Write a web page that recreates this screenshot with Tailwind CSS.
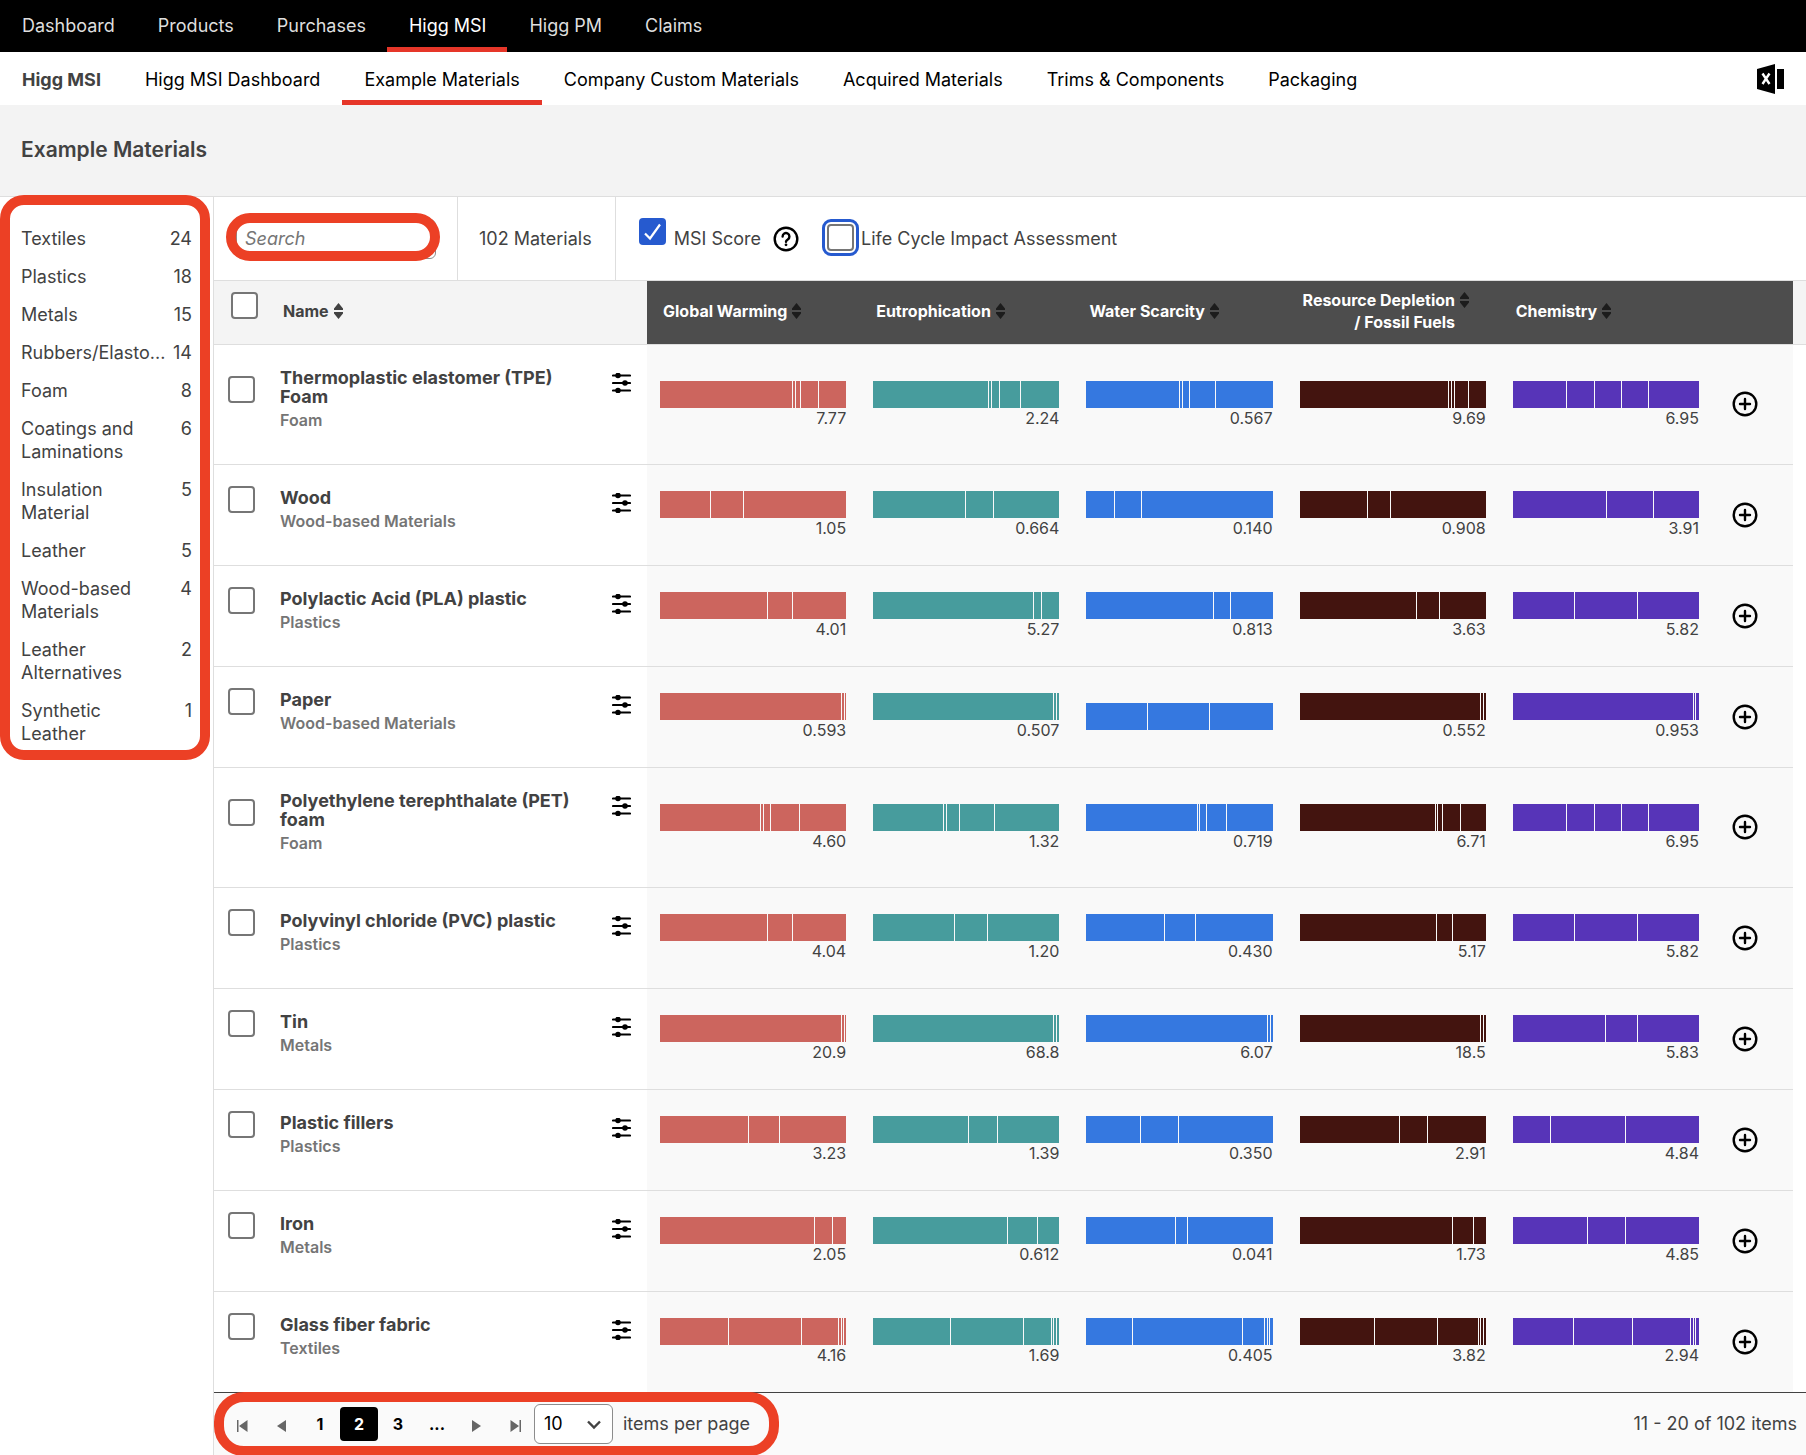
<!DOCTYPE html>
<html lang="en">
<head>
  <meta charset="UTF-8" />
  <meta name="viewport" content="width=device-width, initial-scale=1.0" />
  <title>Example Materials</title>
  <script src="https://cdn.jsdelivr.net/npm/@tailwindcss/browser@4"></script>
</head>
<body class="min-h-screen flex flex-col bg-white text-[#424242] text-lg font-['Inter',sans-serif]">

  <!-- Main navigation -->
  <nav class="flex h-[52px] bg-black text-[#dedede]">
    <a href="#" class="pl-[22px] pr-[21px] pt-3 leading-7">Dashboard</a>
    <a href="#" class="pl-[22px] pr-[21px] pt-3 leading-7">Products</a>
    <a href="#" class="pl-[22px] pr-[21px] pt-3 leading-7">Purchases</a>
    <a href="#" class="pl-[22px] pr-[21px] pt-3 leading-7 text-white border-b-5 border-[#e63629]">Higg MSI</a>
    <a href="#" class="pl-[22px] pr-[21px] pt-3 leading-7">Higg PM</a>
    <a href="#" class="pl-[22px] pr-[21px] pt-3 leading-7">Claims</a>
  </nav>

  <!-- Section navigation -->
  <nav class="flex h-[53px] bg-white text-black">
    <span class="px-[22px] pt-[14px] leading-7 font-bold text-[#424242]">Higg MSI</span>
    <a href="#" class="px-[22px] pt-[14px] leading-7">Higg MSI Dashboard</a>
    <a href="#" class="px-[22px] pt-[14px] leading-7 border-b-5 border-[#e63629]">Example Materials</a>
    <a href="#" class="px-[22px] pt-[14px] leading-7">Company Custom Materials</a>
    <a href="#" class="px-[22px] pt-[14px] leading-7">Acquired Materials</a>
    <a href="#" class="px-[22px] pt-[14px] leading-7">Trims &amp; Components</a>
    <a href="#" class="px-[22px] pt-[14px] leading-7">Packaging</a>
    <button aria-label="Export to Excel" class="ml-auto mr-[22px]">
      <svg width="27" height="30" viewBox="0 0 27 30">
        <path d="M0 5 18 0v30L0 25z" />
        <path d="M20 5h7v20h-7z" />
        <path d="M5.500 9.500 12.500 20M12.500 9.500 5.500 20" stroke="#fff" stroke-width="2.400" />
      </svg>
    </button>
  </nav>

  <header class="flex items-center h-[92px] pl-[21px] bg-[#f3f3f3] border-b border-[#dedede]">
    <h1 class="text-[21px] font-semibold">Example Materials</h1>
  </header>

  <div class="flex flex-1">
    <!-- Categories -->
    <aside class="relative w-[214px] shrink-0 border-r border-[#dedede]">
      <ul id="categories" class="flex flex-col gap-[15px] pl-[21px] pr-[21px] pt-[30px] leading-[23px]"></ul>
      <div class="absolute left-0 -top-[2px] w-[210px] h-[565px] border-10 border-[#ec4025] rounded-3xl pointer-events-none"></div>
    </aside>

    <main class="flex-1 min-w-0 flex flex-col">
      <!-- Filters -->
      <div class="flex h-[84px] border-b border-[#dedede]">
        <div class="relative flex items-center pl-[22px] pr-[21px] border-r border-[#dedede]">
          <input type="text" placeholder="Search" aria-label="Search" class="w-[200px] h-10 px-2 border border-[#8c8c8c] rounded-md italic placeholder:text-[#757575]" />
          <div class="absolute left-3 top-4 w-[214px] h-12 border-10 border-[#ec4025] rounded-3xl pointer-events-none"></div>
        </div>
        <div class="flex items-center pl-[21px] pr-[23px] border-r border-[#dedede]">102 Materials</div>
        <div class="flex items-center pl-[23px]">
          <span class="relative mb-[14px]">
            <input type="checkbox" id="msiScore" checked class="block appearance-none size-[27px] rounded bg-[#265acf]" />
            <svg class="absolute inset-0 pointer-events-none" width="27" height="27" viewBox="0 0 27 27" fill="none" stroke="#fff" stroke-width="2.200"><path d="M6 15.500 11 20.500 21 6.500" /></svg>
          </span>
          <label for="msiScore" class="ml-2">MSI Score</label>
          <button aria-label="About MSI Score" class="ml-3">
            <svg width="26" height="26" viewBox="0 0 26 26" fill="none" stroke="#000" stroke-width="2.400">
              <circle cx="13" cy="13" r="11.300" />
              <path d="M9.600 10.500a3.400 3.400 0 1 1 5.200 2.900c-1.300.8-1.800 1.300-1.800 2.300" stroke-linecap="round" />
              <circle cx="13" cy="18.800" r="1.400" fill="#000" stroke="none" />
            </svg>
          </button>
          <input type="checkbox" id="lcia" class="ml-7 mb-0.5 appearance-none size-[27px] rounded border-2 border-[#767676] bg-white outline-3 outline-offset-2 outline-[#265acf]" />
          <label for="lcia" class="ml-[7px]">Life Cycle Impact Assessment</label>
        </div>
      </div>

      <!-- Materials -->
      <table class="w-full table-fixed border-collapse">
        <colgroup>
          <col class="w-[66px]" /><col class="w-[314px]" /><col class="w-[53px]" />
          <col /><col /><col /><col /><col />
          <col class="w-[80px]" /><col class="w-[13px]" />
        </colgroup>
        <thead>
          <tr id="head" class="h-[63px] border-b border-[#dedede] text-base font-extrabold leading-[22px]"></tr>
        </thead>
        <tbody id="rows"></tbody>
      </table>

      <!-- Paging -->
      <footer class="relative flex-1 flex items-center min-h-[63px] pl-[9px] pr-[9px] bg-[#fafafa] border-t border-[#424242]">
        <div class="flex items-center gap-px text-base font-bold text-black">
          <button aria-label="First page" class="w-[38px] h-[34px] pt-1 flex items-center justify-center"><svg width="11" height="12" viewBox="0 0 11 12" fill="#666"><path d="M0 0h1.500v12H0zM10.500 0v12L2 6z" /></svg></button>
          <button aria-label="Previous page" class="w-[38px] h-[34px] pt-1 flex items-center justify-center"><svg width="9" height="12" viewBox="0 0 9 12" fill="#666"><path d="M9 0v12L0 6z" /></svg></button>
          <button class="w-[38px] h-[34px]">1</button>
          <button aria-current="page" class="w-[38px] h-[34px] rounded bg-black text-white">2</button>
          <button class="w-[38px] h-[34px]">3</button>
          <button class="w-[38px] h-[34px]">...</button>
          <button aria-label="Next page" class="w-[38px] h-[34px] pt-1 flex items-center justify-center"><svg width="9" height="12" viewBox="0 0 9 12" fill="#666"><path d="M0 0v12l9-6z" /></svg></button>
          <button aria-label="Last page" class="w-[38px] h-[34px] pt-1 flex items-center justify-center"><svg width="11" height="12" viewBox="0 0 11 12" fill="#666"><path d="M9.500 0H11v12H9.500zM.500 0v12L9 6z" /></svg></button>
        </div>
        <div class="relative">
          <select id="pageSize" class="block appearance-none w-[79px] h-10 pl-[9px] border border-[#8c8c8c] rounded-md bg-white text-black">
            <option>10</option>
            <option>20</option>
            <option>50</option>
          </select>
          <svg class="absolute right-3 top-4 pointer-events-none" width="14" height="10" viewBox="0 0 14 10" fill="none" stroke="#424242" stroke-width="2.400"><path d="M1 1.500 7 7.500 13 1.500" /></svg>
        </div>
        <label for="pageSize" class="ml-[10px]">items per page</label>
        <span class="ml-auto">11 - 20 of 102 items</span>
        <div class="absolute left-0 -top-px w-[565px] h-[64px] border-10 border-[#ec4025] rounded-[30px] pointer-events-none"></div>
      </footer>
    </main>
  </div>

  <script>
    const categoryList = [
      ['Textiles', 24], ['Plastics', 18], ['Metals', 15], ['Rubbers/Elasto...', 14], ['Foam', 8],
      ['Coatings and Laminations', 6], ['Insulation Material', 5], ['Leather', 5],
      ['Wood-based Materials', 4], ['Leather Alternatives', 2], ['Synthetic Leather', 1]
    ];

    const metrics = [
      { name: 'Global Warming', color: 'bg-[#cc655e]' },
      { name: 'Eutrophication', color: 'bg-[#479c9d]' },
      { name: 'Water Scarcity', color: 'bg-[#3578e0]' },
      { name: 'Resource Depletion<br>/ Fossil Fuels', color: 'bg-[#43140f]' },
      { name: 'Chemistry', color: 'bg-[#5734b8]' }
    ];

    // scores: one [value, cumulative % where each segment ends] per metric
    const materials = [
      { name: 'Thermoplastic elastomer (TPE) Foam', type: 'Foam', scores: [
        ['7.77', [71.7, 73.3, 75.9, 85.5]], ['2.24', [62.2, 63.6, 67.9, 79.5]], ['0.567', [50.2, 51.7, 55.7, 69.4]], ['9.69', [80.4, 81.8, 83.7, 90.8]], ['6.95', [29.1, 44.1, 58.6, 73]]] },
      { name: 'Wood', type: 'Wood-based Materials', scores: [
        ['1.05', [27.2, 45]], ['0.664', [49.9, 64.9]], ['0.140', [15.3, 30]], ['0.908', [36.5, 49.3]], ['3.91', [50.7, 75.6]]] },
      { name: 'Polylactic Acid (PLA) plastic', type: 'Plastics', scores: [
        ['4.01', [57.9, 71.4]], ['5.27', [86.2, 90.8]], ['0.813', [68.5, 77.6]], ['3.63', [63, 75.2]], ['5.82', [33.6, 67.3]]] },
      { name: 'Paper', type: 'Wood-based Materials', scores: [
        ['0.593', [97.5, 99.1]], ['0.507', [97.3, 98.6]], ['', [33.1, 66.5]], ['0.552', [97.6, 99.1]], ['0.953', [97.4, 98.6]]] },
      { name: 'Polyethylene terephthalate (PET) foam', type: 'Foam', scores: [
        ['4.60', [54.3, 55.7, 59.7, 75.4]], ['1.32', [37.9, 39.5, 46.5, 65.4]], ['0.719', [59.9, 61.3, 64.8, 75.5]], ['6.71', [73.3, 74.6, 77.1, 86.8]], ['6.95', [29.1, 44.1, 58.6, 73]]] },
      { name: 'Polyvinyl chloride (PVC) plastic', type: 'Plastics', scores: [
        ['4.04', [58.1, 71.5]], ['1.20', [44, 61.5]], ['0.430', [42, 58.8]], ['5.17', [73.8, 82.5]], ['5.82', [33.6, 67.3]]] },
      { name: 'Tin', type: 'Metals', scores: [
        ['20.9', [97.5, 99.1]], ['68.8', [97.3, 98.6]], ['6.07', [97.6, 98.9]], ['18.5', [97.6, 99.1]], ['5.83', [50.3, 67.4]]] },
      { name: 'Plastic fillers', type: 'Plastics', scores: [
        ['3.23', [47.9, 64.5]], ['1.39', [51.4, 66.9]], ['0.350', [29.3, 49.8]], ['2.91', [53.8, 68.9]], ['4.84', [20.5, 60.8]]] },
      { name: 'Iron', type: 'Metals', scores: [
        ['2.05', [83.5, 92.9]], ['0.612', [72.3, 88.7]], ['0.041', [48.1, 54.6]], ['1.73', [82.5, 93.8]], ['4.85', [40.6, 60.8]]] },
      { name: 'Glass fiber fabric', type: 'Textiles', scores: [
        ['4.16', [36.8, 76.4, 96.1, 97.5, 99.1]], ['1.69', [41.9, 81, 96, 97.3, 98.6]], ['0.405', [24.8, 84.2, 96, 97.6, 98.9]], ['3.82', [40.3, 74.6, 96.2, 97.6, 99.1]], ['2.94', [32.7, 64.8, 95.9, 97.4, 98.6]]] }
    ];

    const sortIcon = `<svg class="shrink-0 mt-[3px]" width="9" height="16" viewBox="0 0 9 16" fill="currentColor"><path d="M4.500 0 9 5.500V7H0V5.500zM0 9h9v1.500L4.500 16 0 10.500z" /></svg>`;

    const bar = (ends, color) => [...ends, 100].map((end, i) => `
      <div class="${color} border-[#f9f9f9] border-r last:border-r-0" style="width:${end - (ends[i - 1] || 0)}%"></div>`).join('');

    document.getElementById('categories').innerHTML = categoryList.map(([name, count]) => `
      <li><a href="#" class="flex justify-between">
        <span class="w-[147px]">${name}</span><span>${count}</span>
      </a></li>`).join('');

    document.getElementById('head').innerHTML = `
      <th class="bg-[#f4f4f4] pl-[17px] pb-[14px]"><input type="checkbox" aria-label="Select all" class="block appearance-none size-[27px] rounded border-2 border-[#767676] bg-white" /></th>
      <th colspan="2" class="bg-[#f4f4f4] pl-[3px] pb-0.5"><button class="flex gap-[5px]">Name ${sortIcon}</button></th>
      ${metrics.map(m => `
      <th class="bg-[#4d4d4d] pl-4 pb-0.5 text-white"><button class="flex gap-[5px] text-right whitespace-nowrap">${m.name} <span class="text-[#1c1c1c]">${sortIcon}</span></button></th>`).join('')}
      <th class="bg-[#4d4d4d]"></th>
      <th class="bg-[#f4f4f4]"></th>`;

    document.getElementById('rows').innerHTML = materials.map((m, row) => `
      <tr class="${m.name.length > 32 ? 'h-[120px]' : 'h-[101px]'} group">
        <td class="border-b border-[#dedede] group-last:border-b-0 pl-[14px] pb-[30px]"><input type="checkbox" aria-label="Select ${m.name}" class="block appearance-none size-[27px] rounded border-2 border-[#767676] bg-white" /></td>
        <td class="border-b border-[#dedede] group-last:border-b-0 align-top pt-[23px] font-bold leading-[19px]">
          ${m.name}
          <div class="mt-1 text-base leading-5 font-semibold text-[#757575]">${m.type}</div>
        </td>
        <td class="border-b border-[#dedede] group-last:border-b-0 align-top pt-[28px] pl-[18px]">
          <button aria-label="Customize ${m.name}" class="block">
            <svg width="19" height="20" viewBox="0 0 19 20" stroke="#000" stroke-width="2.200" stroke-linecap="round">
              <path d="M1 2.500h17M1 10h17M1 17.500h17" /><circle cx="6" cy="2.500" r="1.700" /><circle cx="13" cy="10" r="1.700" /><circle cx="6" cy="17.500" r="1.700" />
            </svg>
          </button>
        </td>
        ${m.scores.map(([value, ends], i) => `
        <td class="border-b border-[#dedede] group-last:border-b-0 bg-[#f9f9f9] pl-[13px] pr-[14px]">
          <div class="flex h-[27px]">${bar(ends, metrics[i].color)}</div>
          ${value && `<div class="text-right text-base leading-5">${value}</div>`}
        </td>`).join('')}
        <td class="border-b border-[#dedede] group-last:border-b-0 bg-[#f9f9f9] pl-[19px]">
          <button aria-label="Add ${m.name}" class="block">
            <svg width="26" height="26" viewBox="0 0 26 26" fill="none" stroke="#000" stroke-width="2.400"><circle cx="13" cy="13" r="11.300" /><path d="M13 8v10M8 13h10" stroke-linecap="round" /></svg>
          </button>
        </td>
        <td></td>
      </tr>`).join('');
  </script>
</body>
</html>
